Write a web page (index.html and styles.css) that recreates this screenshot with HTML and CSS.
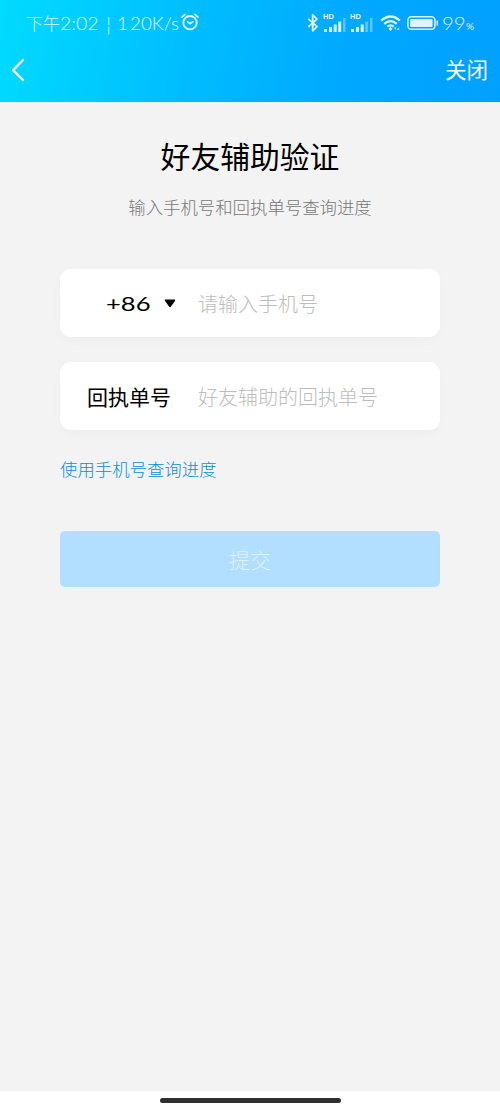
FILE: index.html
```html
<!DOCTYPE html>
<html lang="zh-CN">
<head>
<meta charset="utf-8">
<title>好友辅助验证</title>
<link rel="stylesheet" href="styles.css">
</head>
<body>
<div class="screen">
  <header class="header">
    <div class="status">
      <div class="status-left">
        <span class="time-cn">下午</span><span class="time">2:02</span><span class="divider">¦</span><span class="speed"><span class="speed-lead">1</span>20K/s</span>
        <svg class="alarm" width="20" height="20" viewBox="0 0 20 20" fill="none" stroke="currentColor" stroke-linecap="round"><circle cx="10" cy="10.7" r="6.7" stroke-width="1.8"/><path d="M2 5.2 5 2.4M18 5.2 15 2.4M7.5 9.7l2.5 2 3-2" stroke-width="1.6"/></svg>
      </div>
      <div class="status-right">
        <svg class="bluetooth" width="12" height="20" viewBox="0 0 12 20" fill="none" stroke="currentColor" stroke-width="1.8" stroke-linejoin="round"><path d="M1.3 5.8 10 13.7 5.7 17.9V1.9L10 6.1 1.3 13.9"/></svg>
        <div class="signal"><span class="hd">HD</span><svg width="24" height="14" viewBox="0 0 24 14" fill="currentColor"><path d="M1 11h3v3H1zM6 9h3v5H6zM10.7 6.5h3V14h-3zM15.2 3.5h3V14h-3z"/><path opacity=".4" d="M20 0h2.5v14H20z"/></svg></div>
        <div class="signal"><span class="hd">HD</span><svg width="24" height="14" viewBox="0 0 24 14" fill="currentColor"><path d="M1 11h3v3H1zM6 9h3v5H6zM10.7 6.5h3V14h-3z"/><path opacity=".4" d="M15.2 3.5h3V14h-3zM20 0h2.5v14H20z"/></svg></div>
        <svg class="wifi" width="22" height="18" viewBox="0 0 22 18" fill="none" stroke="currentColor" stroke-width="2.2"><path d="M1.2 6.6q9.3-8.2 18.6 0M4.3 9.8q6.2-5.4 12.4 0M7.3 12.7q3.2-2.6 6.4 0"/><path d="m10.5 13 2 2-2 2-2-2zM14.2 13.5h2.2l-1.1 2.5zM17.2 16h2.2l-1.1-2.5z" fill="currentColor" stroke="none"/></svg>
        <svg class="battery" width="32" height="16" viewBox="0 0 32 16"><rect x=".9" y="1.7" width="27" height="12.6" rx="3.4" fill="none" stroke="currentColor" stroke-width="1.5"/><rect x="3.2" y="4" width="22.4" height="8" rx="1" fill="currentColor"/><path d="M29.5 5.5h1.5v5h-1.5z" fill="currentColor"/></svg>
        <span class="percent">99</span><span class="percent-sign">%</span>
      </div>
    </div>
    <nav class="nav">
      <svg class="back" width="14" height="24" viewBox="0 0 14 24" fill="none" stroke="currentColor" stroke-width="2.4" stroke-linecap="round" stroke-linejoin="round"><path d="M12 2 2 12.2 12 22"/></svg>
      <span class="close">关闭</span>
    </nav>
  </header>
  <main class="content">
    <h1 class="title">好友辅助验证</h1>
    <p class="subtitle">输入手机号和回执单号查询进度</p>
    <div class="field phone">
      <div class="label"><span class="code">+86</span><svg class="caret" width="12" height="9" viewBox="0 0 12 9"><path d="M1.5 1.2h9L6 7.5z" fill="#000" stroke="#000" stroke-width="1.5" stroke-linejoin="round"/></svg></div>
      <span class="placeholder">请输入手机号</span>
    </div>
    <div class="field receipt">
      <div class="label">回执单号</div>
      <span class="placeholder">好友辅助的回执单号</span>
    </div>
    <a class="link">使用手机号查询进度</a>
    <div class="submit">提交</div>
  </main>
  <footer class="home"><div class="home-bar"></div></footer>
</div>
</body>
</html>
```
FILE: styles.css
```css
* { box-sizing: border-box; }
body { margin: 0; font-family: "Noto Sans CJK SC", sans-serif; font-weight: 300; white-space: nowrap; }
.screen { width: 500px; height: 1111px; background: #f3f3f3; display: flex; flex-direction: column; overflow: hidden; }
.header { height: 102px; flex: none; color: #fff; background: linear-gradient(100deg, #00dbff 0%, #00bdff 38%, #00a8ff 70%, #00a0ff 100%); }
.status { height: 46px; padding: 0 25px 0 26px; display: flex; justify-content: space-between; align-items: center; opacity: .88; }
.status-left, .status-right { display: flex; align-items: center; line-height: 24px; }
.time-cn { font-size: 17px; width: 34px; }
.time, .speed, .percent, .code { font-family: Lato, sans-serif; transform-origin: left center; }
.time { font-size: 17px; width: 41px; margin-top: 2px; transform: scaleX(1.15); }
.divider { font-size: 16px; width: 15px; text-align: center; }
.speed { font-size: 17px; width: 63px; margin: 2px 0 0 1px; transform: scaleX(1.1); }
.speed-lead { margin-right: 2px; }
.alarm { margin-top: -3px; }
.bluetooth { margin-right: 4px; }
.signal { width: 24px; height: 18px; margin-right: 3px; display: grid; align-items: end; }
.signal > * { grid-area: 1 / 1; }
.hd { align-self: start; margin-top: -1px; font: 700 7.5px/7px "Liberation Sans", sans-serif; }
.wifi { margin: 0 5px 0 3px; }
.percent { width: 24px; font-size: 17px; margin: 2px 0 0 3px; transform: scaleX(1.2); }
.percent-sign { width: 9px; font: 400 10px/10px Lato, sans-serif; margin-top: 6px; }
.nav { height: 48px; padding: 0 12px 0 11px; display: flex; align-items: center; justify-content: space-between; }
.close { font-size: 21.5px; line-height: 30px; margin-top: -2px; font-weight: 400; }
.content { flex: 1; padding: 0 60px; }
.title { margin: 34px 0 0; font-size: 29.8px; line-height: 38px; font-weight: 400; text-align: center; }
.subtitle { margin: 20px 0 0; font-size: 17.4px; line-height: 26px; text-align: center; color: #777; }
.field { height: 68px; background: #fff; border-radius: 11px; box-shadow: 0 4px 12px rgba(0, 0, 0, .025); display: flex; align-items: center; padding-left: 27px; }
.phone { margin-top: 49px; }
.receipt { margin-top: 25px; }
.label { width: 111px; flex: none; font-size: 21px; line-height: 30px; color: #000; font-weight: 400; display: flex; align-items: center; }
.code { margin-left: 19px; width: 58px; font-size: 20px; transform: scaleX(1.28); }
.placeholder { font-size: 20px; line-height: 30px; margin-top: 1px; color: #bdbdbd; }
.link { display: block; margin-top: 26px; font-size: 17.4px; line-height: 26px; color: #078fdc; }
.submit { height: 56px; margin-top: 49px; border-radius: 5px; background: #b2deff; color: #ddf3ff; font-size: 21px; line-height: 56px; text-align: center; }
.home { height: 20px; flex: none; background: #fff; padding-top: 7px; }
.home-bar { width: 181px; height: 5px; margin: 0 auto; border-radius: 3px; background: #303030; }
```
